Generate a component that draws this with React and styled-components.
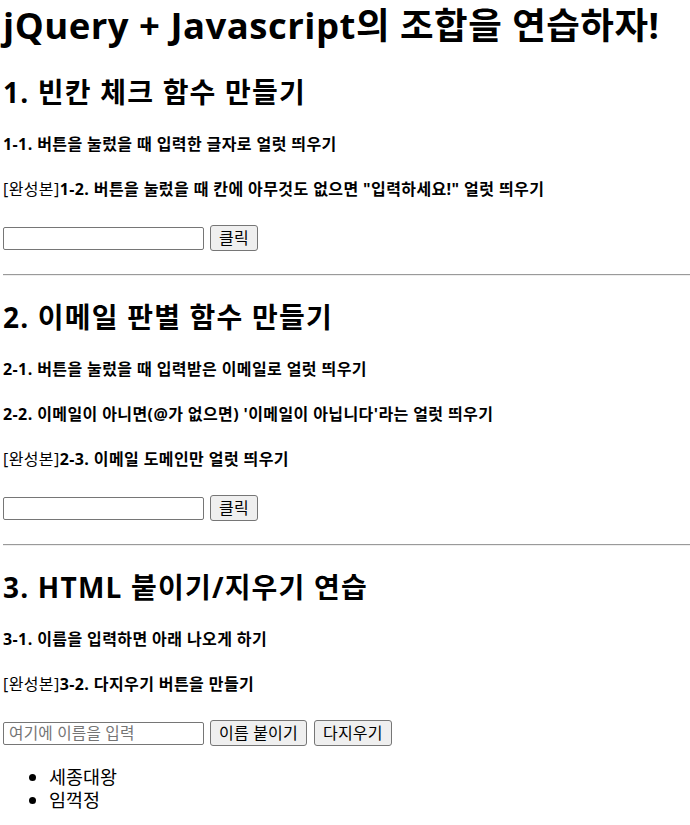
import React from "react";
import styled, { createGlobalStyle } from "styled-components";

const GlobalStyle = createGlobalStyle`
  html, body { background: #ffffff; }
  body {
    margin: 0;
    padding: 3px 0 0 3px;
    color: #000000;
    font-family: "Open Sans", "Noto Sans CJK KR", sans-serif;
  }
`;

const Page = styled.div`
  display: flex;
  flex-direction: column;
`;

const Title = styled.h1`
  margin: 0;
  font-size: 36.5px;
  line-height: 44px;
  font-weight: 700;
  white-space: nowrap;
  letter-spacing: 0.5px;
`;

const Section = styled.section`
  display: flex;
  flex-direction: column;
`;

const Heading = styled.h2`
  margin: ${(p) => p.$top}px 0 26px;
  font-size: 28px;
  line-height: 32px;
  font-weight: 700;
  white-space: nowrap;
  letter-spacing: 1.2px;
`;

const Task = styled.p`
  margin: 0 0 25px;
  font-size: 16px;
  line-height: 20px;
  font-weight: 700;
  white-space: nowrap;
  letter-spacing: 0.4px;
`;

const Tag = styled.span`
  font-weight: 400;
`;

const Row = styled.div`
  display: flex;
  align-items: center;
  height: 26px;
  margin-top: 1px;
  gap: 6px;
`;

const TextInput = styled.input`
  box-sizing: border-box;
  width: 201px;
  height: 23px;
  margin: 0;
  padding: 1px 5px;
  border: 1px solid #767676;
  border-radius: 2px;
  font-family: "Open Sans", "Noto Sans CJK KR", sans-serif;
  font-size: 15.7px;
  letter-spacing: 0.2px;
  &::placeholder { color: #757575; }
`;

const Button = styled.button`
  box-sizing: border-box;
  height: 26px;
  margin: 0 0 0 ${(p) => (p.$extra ? 1 : 0)}px;
  padding: 0 8px;
  border: 1px solid #767676;
  border-radius: 3px;
  background: #efefef;
  color: #000000;
  font-family: "Open Sans", "Noto Sans CJK KR", sans-serif;
  font-size: 16px;
  line-height: 22px;
  letter-spacing: 0.2px;
  white-space: nowrap;
`;

const Divider = styled.hr`
  margin: 23px 0 0;
  height: 0;
  border: 0;
  border-top: 1px solid #9a9a9a;
  border-bottom: 1px solid #eeeeee;
`;

const NameList = styled.ul`
  margin: 19px 0 0;
  padding: 0 0 0 46px;
  list-style: disc;
`;

const NameItem = styled.li`
  font-size: 18.5px;
  line-height: 23px;
`;

export default function App() {
  return (
    <>
      <GlobalStyle />
      <Page>
        <Title>jQuery + Javascript의 조합을 연습하자!</Title>

        <Section>
          <Heading $top={29}>1. 빈칸 체크 함수 만들기</Heading>
          <Task>1-1. 버튼을 눌렀을 때 입력한 글자로 얼럿 띄우기</Task>
          <Task>
            <Tag>[완성본]</Tag>1-2. 버튼을 눌렀을 때 칸에 아무것도 없으면 "입력하세요!" 얼럿 띄우기
          </Task>
          <Row>
            <TextInput type="text" />
            <Button>클릭</Button>
          </Row>
          <Divider />
        </Section>

        <Section>
          <Heading $top={25}>2. 이메일 판별 함수 만들기</Heading>
          <Task>2-1. 버튼을 눌렀을 때 입력받은 이메일로 얼럿 띄우기</Task>
          <Task>2-2. 이메일이 아니면(@가 없으면) '이메일이 아닙니다'라는 얼럿 띄우기</Task>
          <Task>
            <Tag>[완성본]</Tag>2-3. 이메일 도메인만 얼럿 띄우기
          </Task>
          <Row>
            <TextInput type="text" />
            <Button>클릭</Button>
          </Row>
          <Divider />
        </Section>

        <Section>
          <Heading $top={25}>3. HTML 붙이기/지우기 연습</Heading>
          <Task>3-1. 이름을 입력하면 아래 나오게 하기</Task>
          <Task>
            <Tag>[완성본]</Tag>3-2. 다지우기 버튼을 만들기
          </Task>
          <Row>
            <TextInput type="text" placeholder="여기에 이름을 입력" />
            <Button>이름 붙이기</Button>
            <Button $extra>다지우기</Button>
          </Row>
          <NameList>
            <NameItem>세종대왕</NameItem>
            <NameItem>임꺽정</NameItem>
          </NameList>
        </Section>
      </Page>
    </>
  );
}
